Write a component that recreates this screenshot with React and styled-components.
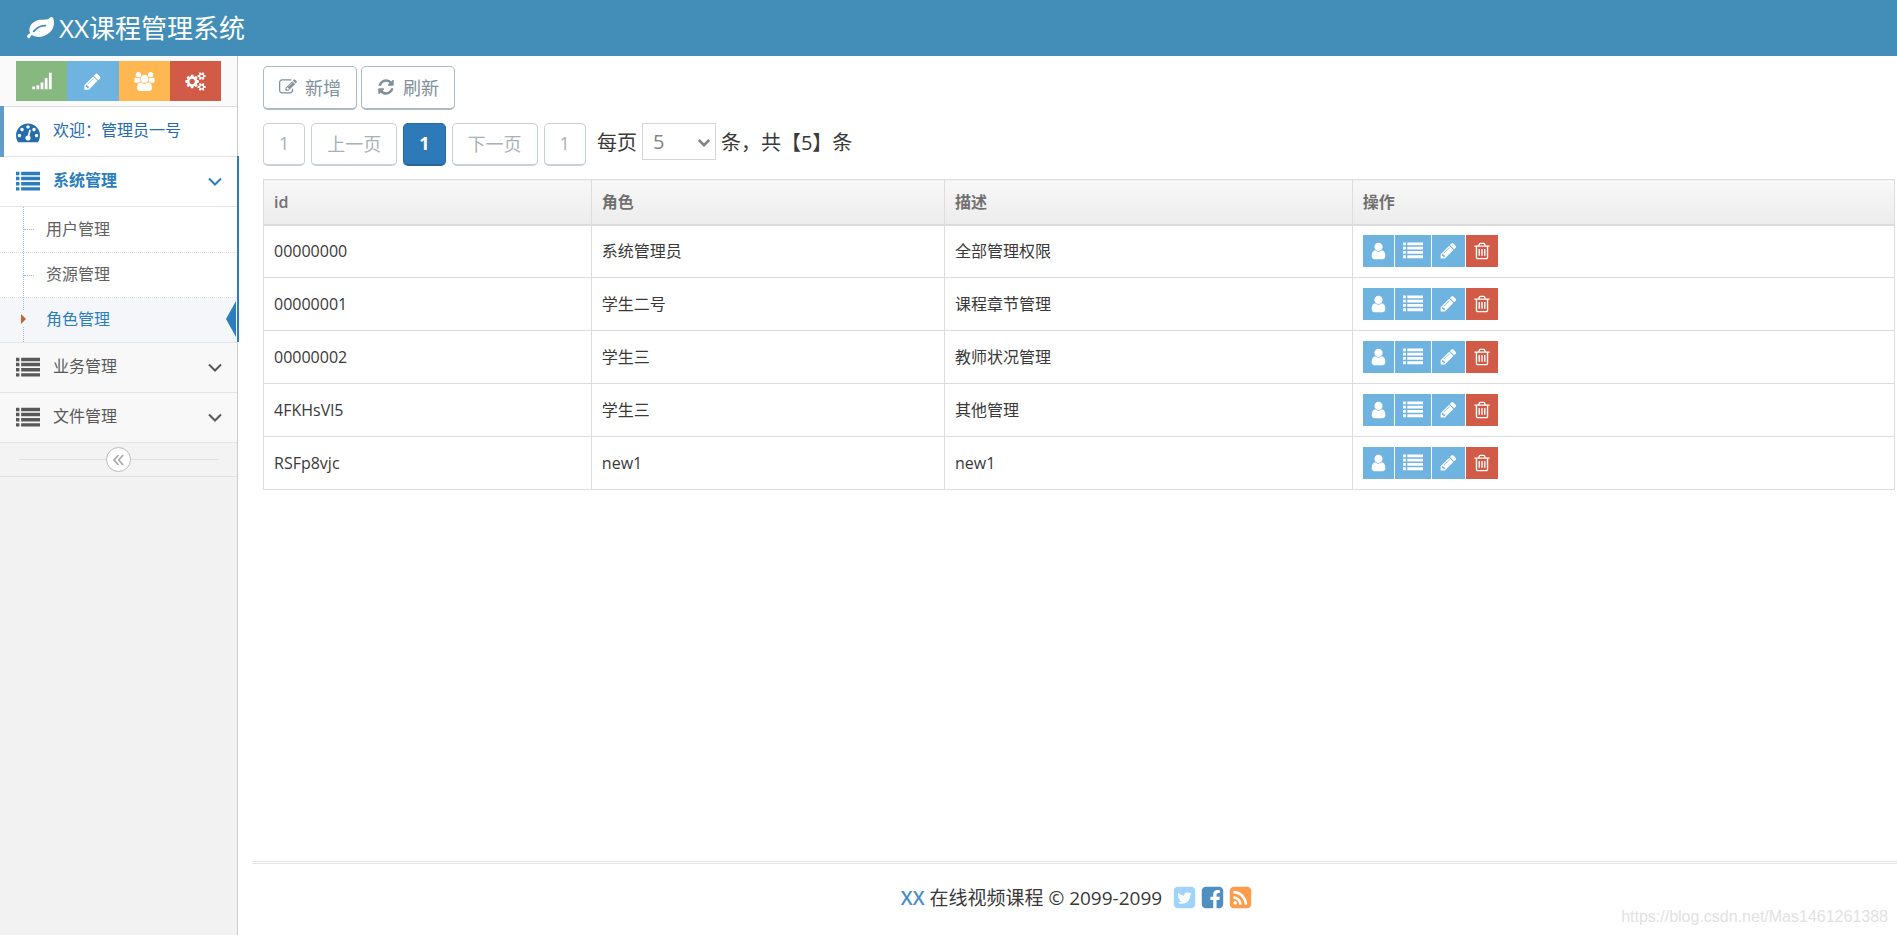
import React, { useState } from 'react';
import styled, { createGlobalStyle, css } from 'styled-components';

const GlobalStyle = createGlobalStyle`
  * {
    box-sizing: border-box;
  }

  body {
    margin: 0;
    background-color: #fff;
    color: #393939;
    font-family: 'Open Sans', 'Noto Sans CJK SC', sans-serif;
    font-size: 16px;
    line-height: 24px;
  }

  button, select {
    font-family: inherit;
  }

  a {
    text-decoration: none;
  }

  ul {
    list-style: none;
    margin: 0;
    padding: 0;
  }
`;

const Page = styled.div`
  display: flex;
  flex-direction: column;
  min-height: 100vh;
`;

const Navbar = styled.header`
  display: flex;
  align-items: center;
  height: 56px;
  padding: 0 27px;
  background-color: #438eb9;
`;

const Brand = styled.a`
  display: flex;
  align-items: center;
  gap: 5px;
  color: #fff;
  font-size: 26px;
  line-height: 36px;
  white-space: nowrap;
`;

const Body = styled.div`
  display: flex;
  flex: 1;
`;

const Sidebar = styled.nav`
  flex: none;
  width: 238px;
  background-color: #f2f2f2;
  border-right: 1px solid #ccc;
`;

const Shortcuts = styled.div`
  display: flex;
  height: 51px;
  padding: 5px 16px;
  background-color: #fafafa;
  border-bottom: 1px solid #ddd;
`;

const Shortcut = styled.button`
  display: flex;
  flex: 1;
  align-items: center;
  justify-content: center;
  padding: 0;
  border: 0;
  color: #fff;
  background-color: ${props => props.color};
  cursor: pointer;
`;

const NavGroup = styled.li`
  position: relative;
  border-bottom: 1px solid #e5e5e5;

  ${props => props.$open && css`
    &::after {
      content: '';
      position: absolute;
      top: -1px;
      right: -2px;
      bottom: 0;
      width: 2px;
      background-color: #2b7dbc;
    }
  `}

  ${props => props.$current && css`
    &::before {
      content: '';
      position: absolute;
      top: -1px;
      left: 0;
      bottom: -1px;
      width: 4px;
      background-color: #629cc9;
    }
  `}
`;

const navColors = {
  focus: '#266cad',
  open: '#2b7dbc',
};

const NavLink = styled.a`
  display: flex;
  align-items: center;
  gap: 13px;
  height: 49px;
  padding: 0 15px 0 16px;
  color: ${props => navColors[props.$state] || '#585858'};
  background-color: ${props => (props.$state ? '#fff' : '#f8f8f8')};
  font-weight: ${props => (props.$state === 'open' ? 'bold' : 'normal')};
`;

const NavText = styled.span`
  flex: 1;
  padding-bottom: 3px;
`;

const Submenu = styled.ul`
  position: relative;
  background-color: #fff;
  border-top: 1px solid #e5e5e5;

  &::before {
    content: '';
    position: absolute;
    z-index: 1;
    top: 0;
    bottom: 0;
    left: 23px;
    border-left: 1px dotted #9dbdd6;
  }
`;

const SubItem = styled.li`
  position: relative;
  height: 45px;

  & + & {
    border-top: 1px dotted #e0e0e0;
  }

  &::before {
    content: '';
    position: absolute;
    top: 22px;
    left: 24px;
    width: 10px;
    border-top: 1px dotted #9dbdd6;
    display: ${props => (props.$active ? 'none' : 'block')};
  }
`;

const SubLink = styled.a`
  display: flex;
  align-items: center;
  height: 100%;
  padding: 0 0 2px 46px;
  color: ${props => (props.$active ? '#2b7dbc' : '#616161')};
  background-color: ${props => (props.$active ? '#f4f6fa' : 'transparent')};
`;

const Caret = styled.span`
  position: absolute;
  z-index: 2;
  top: 13px;
  left: 20px;
  display: flex;
  align-items: center;
  height: 16px;
  background-color: #f4f6fa;

  &::before {
    content: '';
    border: 5px solid transparent;
    border-left-color: #c86139;
    border-right-width: 0;
    margin-left: 1px;
  }
`;

const ActiveArrow = styled.span`
  position: absolute;
  top: 3px;
  right: 1px;
  border: 18px solid transparent;
  border-right: 10px solid #2b7dbc;
  border-left-width: 0;
`;

const CollapseBar = styled.div`
  display: flex;
  align-items: center;
  height: 34px;
  padding: 0 19px;
  background-color: #f3f3f3;
  border-bottom: 1px solid #e0e0e0;

  &::before,
  &::after {
    content: '';
    flex: 1;
    border-top: 1px solid #e0e0e0;
  }
`;

const CollapseButton = styled.button`
  display: flex;
  align-items: center;
  justify-content: center;
  width: 25px;
  height: 25px;
  padding: 0;
  color: #aaa;
  background-color: #fff;
  border: 1px solid #bbb;
  border-radius: 50%;
  cursor: pointer;
`;

const Main = styled.div`
  display: flex;
  flex: 1;
  flex-direction: column;
  min-width: 0;
`;

const Content = styled.main`
  flex: 1;
  padding: 10px 2px 24px 25px;
`;

const Toolbar = styled.div`
  display: flex;
  gap: 4px;
  margin-bottom: 13px;
`;

const ToolButton = styled.button`
  display: flex;
  align-items: center;
  gap: 8px;
  height: 44px;
  padding: 0 15px 2px;
  color: #80909a;
  background-color: #fff;
  border: 1px solid #abbac3;
  border-bottom-width: 2px;
  border-radius: 5px;
  font-size: 18px;
  cursor: pointer;
`;

const Pagination = styled.div`
  display: flex;
  gap: 6px;
  margin-bottom: 13px;
`;

const PageButton = styled.button`
  height: 43px;
  padding: 0 15px 2px;
  color: #a6b1b8;
  background-color: #fff;
  border: 1px solid #c7d1d7;
  border-bottom-width: 2px;
  border-radius: 5px;
  font-size: 18px;

  ${props => props.$current && css`
    color: #fff;
    background-color: #2e7ab9;
    border-color: #27699f;
    font-weight: bold;
  `}
`;

const PageSize = styled.label`
  display: flex;
  align-items: flex-start;
  gap: 5px;
  padding-left: 5px;
  font-size: 20px;
  line-height: 40px;
  white-space: nowrap;
`;

const SelectBox = styled.span`
  position: relative;
  display: flex;

  svg {
    position: absolute;
    top: 15px;
    right: 6px;
    color: #858585;
    pointer-events: none;
  }
`;

const Select = styled.select`
  appearance: none;
  width: 74px;
  height: 37px;
  padding: 0 10px;
  color: #858585;
  background-color: #fff;
  border: 1px solid #d5d5d5;
  border-radius: 0;
  font-size: 20px;
`;

const Table = styled.table`
  width: 100%;
  table-layout: fixed;
  border-collapse: collapse;
  border: 1px solid #ddd;
`;

const Th = styled.th`
  width: ${props => props.width};
  height: 45px;
  padding: 0 10px;
  color: #707070;
  background-image: linear-gradient(to bottom, #f8f8f8, #ececec);
  border: 1px solid #ddd;
  border-bottom-width: 2px;
  font-weight: 600;
  text-align: left;
`;

const Td = styled.td`
  height: 53px;
  padding: 0 10px;
  border: 1px solid #ddd;
`;

const Actions = styled.div`
  display: flex;
  gap: 1px;
`;

const ActionButton = styled.button`
  display: flex;
  align-items: center;
  justify-content: center;
  height: 32px;
  padding: 0 8px;
  color: #fff;
  background-color: ${props => (props.$danger ? '#d15b47' : '#6fb3e0')};
  border: 0;
  cursor: pointer;
`;

const Footer = styled.footer`
  display: flex;
  align-items: center;
  justify-content: center;
  gap: 10px;
  height: 74px;
  margin-left: 15px;
  padding: 0 0 4px 4px;
  border-top: 3px double #e5e5e5;
  font-size: 19px;
`;

const FooterBrand = styled.span`
  color: #478fca;
  font-weight: 600;
`;

const Socials = styled.span`
  display: flex;
  gap: 3px;
`;

const SocialLink = styled.a`
  display: flex;
  color: ${props => props.color};
`;

const Watermark = styled.span`
  position: absolute;
  right: 9px;
  bottom: 6px;
  color: #e2e2e2;
  font-family: 'Liberation Sans', Arial, sans-serif;
  font-size: 16px;
`;

const gearPath = 'v140q0 16-149 31-12 27-30 52 51 113 51 138 0 4-4 7-122 71-124 71-8 0-46-47t-52-68q-20 2-30 2t-30-2q-14 21-52 68t-46 47q-2 0-124-71-4-3-4-7 0-25 51-138-18-25-30-52-149-15-149-31v-140q0-16 149-31 13-29 30-52-51-113-51-138 0-4 4-7 4-2 35-20t59-34 30-16q8 0 46 46.5t52 67.5q20-2 30-2t30 2q51-71 92-112l6-2q4 0 124 70 4 3 4 7 0 25-51 138 17 23 30 52 149 15 149 31z';

const icons = {
  leaf: 'M1280 704q0-26-19-45t-45-19q-172 0-318 49.5t-259.5 134-235.5 219.5q-19 21-19 45 0 26 19 45t45 19q24 0 45-19 27-24 74-71t67-66q137-124 268.5-176t313.5-52q26 0 45-19t19-45zm512-198q0 95-20 193-46 224-184.5 383t-357.5 268q-214 108-438 108-148 0-286-47-15-5-88-42t-96-37q-16 0-39.5 32t-45 70-52.5 70-60 32q-43 0-63.5-17.5t-45.5-59.5q-2-4-6-11t-5.5-10-3-9.5-1.5-13.5q0-35 31-73.5t68-65.5 68-56 31-48q0-4-14-38t-16-44q-9-51-9-104 0-115 43.5-220t119-184.5 170.5-139 204-95.5q55-18 145-25.5t179.5-9 178.5-6 163.5-24 113.5-56.5l29.5-29.5 29.5-28 27-20 36.5-16 43.5-4.5q39 0 70.5 46t47.5 112 24 124 8 96z',
  signal: 'M0 1280h256v256h-256zM384 1152h256v384h-256zM768 896h256v640h-256zM1152 512h256v1024h-256zM1536 0h256v1536h-256z',
  pencil: 'M491 1536l91-91-235-235-91 91v107h128v128h107zm523-928q0-22-22-22-10 0-17 7l-542 542q-7 7-7 17 0 22 22 22 10 0 17-7l542-542q7-7 7-17zm-54-192l416 416-832 832h-416v-416zm683 96q0 53-37 90l-166 166-416-416 166-165q36-38 90-38 53 0 91 38l235 234q37 39 37 91z',
  users: 'M593 896q-162 5-265 128h-134q-82 0-138-40.5t-56-118.5q0-353 124-353 6 0 43.5 21t97.5 42.5 119 21.5q67 0 133-23-5 37-5 66 0 139 81 256zm1071 637q0 120-73 189.5t-194 69.5h-874q-121 0-194-69.5t-73-189.5q0-53 3.5-103.5t14-109 26.5-108.5 43-97.5 62-81 85.5-53.5 111.5-20q10 0 43 21.5t73 48 107 48 135 21.5 135-21.5 107-48 73-48 43-21.5q61 0 111.5 20t85.5 53.5 62 81 43 97.5 26.5 108.5 14 109 3.5 103.5zm-1024-1277q0 106-75 181t-181 75-181-75-75-181 75-181 181-75 181 75 75 181zm704 384q0 159-112.5 271.5t-271.5 112.5-271.5-112.5-112.5-271.5 112.5-271.5 271.5-112.5 271.5 112.5 112.5 271.5zm576 225q0 78-56 118.5t-138 40.5h-134q-103-123-265-128 81-117 81-256 0-29-5-66 66 23 133 23 59 0 119-21.5t97.5-42.5 43.5-21q124 0 124 353zm-128-609q0 106-75 181t-181 75-181-75-75-181 75-181 181-75 181 75 75 181z',
  cogs: 'M896 896q0-106-75-181t-181-75-181 75-75 181 75 181 181 75 181-75 75-181zm768 512q0-52-38-90t-90-38-90 38-38 90q0 53 37.5 90.5t90.5 37.5 90.5-37.5 37.5-90.5zm0-1024q0-52-38-90t-90-38-90 38-38 90q0 53 37.5 90.5t90.5 37.5 90.5-37.5 37.5-90.5zm-384 421v185q0 10-7 19.5t-16 10.5l-155 24q-11 35-32 76 34 48 90 115 7 11 7 20 0 12-7 19-23 30-82.5 89.5t-78.5 59.5q-11 0-21-7l-115-90q-37 19-77 31-11 108-23 155-7 24-30 24h-186q-11 0-20-7.5t-10-17.5l-23-153q-34-10-75-31l-118 89q-7 7-20 7-11 0-21-8-144-133-144-160 0-9 7-19 10-14 41-53t47-61q-23-44-35-82l-152-24q-10-1-17-9.5t-7-19.5v-185q0-10 7-19.5t16-10.5l155-24q11-35 32-76-34-48-90-115-7-11-7-20 0-12 7-20 22-30 82-89t79-59q11 0 21 7l115 90q34-18 77-32 11-108 23-154 7-24 30-24h186q11 0 20 7.5t10 17.5l23 153q34 10 75 31l118-89q8-7 20-7 11 0 21 8 144 133 144 160 0 8-7 19-12 16-42 54t-45 60q23 48 34 82l152 23q10 2 17 10.5t7 19.5zM1920 1338' + gearPath + 'M1920 314' + gearPath,
  dashboard: 'M384 1152q0-53-37.5-90.5t-90.5-37.5-90.5 37.5-37.5 90.5 37.5 90.5 90.5 37.5 90.5-37.5 37.5-90.5zm192-448q0-53-37.5-90.5t-90.5-37.5-90.5 37.5-37.5 90.5 37.5 90.5 90.5 37.5 90.5-37.5 37.5-90.5zm428 481l101-382q6-26-7.5-48.5t-38.5-29.5-48 6.5-30 39.5l-101 382q-60 5-107 43.5t-63 98.5q-20 77 20 146t117 89 146-20 89-117q16-60-6-117t-72-91zm660-33q0-53-37.5-90.5t-90.5-37.5-90.5 37.5-37.5 90.5 37.5 90.5 90.5 37.5 90.5-37.5 37.5-90.5zm-640-640q0-53-37.5-90.5t-90.5-37.5-90.5 37.5-37.5 90.5 37.5 90.5 90.5 37.5 90.5-37.5 37.5-90.5zm448 192q0-53-37.5-90.5t-90.5-37.5-90.5 37.5-37.5 90.5 37.5 90.5 90.5 37.5 90.5-37.5 37.5-90.5zm320 448q0 261-141 483-19 29-54 29h-1402q-35 0-54-29-141-221-141-483 0-182 71-348t191-286 286-191 348-71 348 71 286 191 191 286 71 348z',
  list: 'M0 128h256v256h-256zM0 512h256v256h-256zM0 896h256v256h-256zM0 1280h256v256h-256zM384 128h1408v256h-1408zM384 512h1408v256h-1408zM384 896h1408v256h-1408zM384 1280h1408v256h-1408z',
  edit: 'M888 1184l116-116-152-152-116 116v56h96v96h56zm440-720q-16-16-33 1l-350 350q-17 17-1 33t33-1l350-350q17-17 1-33zm80 594v190q0 119-84.5 203.5t-203.5 84.5h-832q-119 0-203.5-84.5t-84.5-203.5v-832q0-119 84.5-203.5t203.5-84.5h832q63 0 117 25 15 7 18 23 3 17-9 29l-49 49q-14 14-32 8-23-6-45-6h-832q-66 0-113 47t-47 113v832q0 66 47 113t113 47h832q66 0 113-47t47-113v-126q0-13 9-22l64-64q15-15 35-7t20 29zm-96-738l288 288-672 672h-288v-288zm444 132l-92 92-288-288 92-92q28-28 68-28t68 28l152 152q28 28 28 68t-28 68z',
  refresh: 'M1639 1056q0 5-1 7-64 268-268 434.5t-478 166.5q-146 0-282.5-55t-243.5-157l-129 129q-19 19-45 19t-45-19-19-45v-448q0-26 19-45t45-19h448q26 0 45 19t19 45-19 45l-137 137q71 66 161 102t187 36q134 0 250-65t186-179q11-17 53-117 8-23 30-23h192q13 0 22.5 9.5t9.5 22.5zm25-800v448q0 26-19 45t-45 19h-448q-26 0-45-19t-19-45 19-45l138-138q-148-137-349-137-134 0-250 65t-186 179q-11 17-53 117-8 23-30 23h-199q-13 0-22.5-9.5t-9.5-22.5v-7q65-268 270-434.5t480-166.5q146 0 284 55.5t245 156.5l130-129q19-19 45-19t45 19 19 45z',
  user: 'M1536 1399q0 109-62.5 187t-150.5 78h-854q-88 0-150.5-78t-62.5-187q0-85 8.5-160.5t31.5-152 58.5-131 94-89 134.5-34.5q131 128 313 128t313-128q76 0 134.5 34.5t94 89 58.5 131 31.5 152 8.5 160.5zm-256-887q0 159-112.5 271.5t-271.5 112.5-271.5-112.5-112.5-271.5 112.5-271.5 271.5-112.5 271.5 112.5 112.5 271.5z',
  trash: 'M704 736v576q0 14-9 23t-23 9h-64q-14 0-23-9t-9-23v-576q0-14 9-23t23-9h64q14 0 23 9t9 23zm256 0v576q0 14-9 23t-23 9h-64q-14 0-23-9t-9-23v-576q0-14 9-23t23-9h64q14 0 23 9t9 23zm256 0v576q0 14-9 23t-23 9h-64q-14 0-23-9t-9-23v-576q0-14 9-23t23-9h64q14 0 23 9t9 23zm128 724v-948h-896v948q0 22 7 40.5t14.5 27 10.5 8.5h832q3 0 10.5-8.5t14.5-27 7-40.5zm-672-1076h448l-48-117q-7-9-17-11h-317q-10 2-17 11zm928 32v64q0 14-9 23t-23 9h-96v948q0 83-47 143.5t-113 60.5h-832q-66 0-113-58.5t-47-141.5v-952h-96q-14 0-23-9t-9-23v-64q0-14 9-23t23-9h309l70-167q15-37 54-63t79-26h320q40 0 79 26t54 63l70 167h309q14 0 23 9t9 23z',
  twitter: 'M1408 610q-56 25-121 34 68-40 93-117-65 38-134 51-61-66-153-66-87 0-148.5 61.5t-61.5 148.5q0 29 5 48-129-7-242-65t-192-155q-29 50-29 106 0 114 91 175-47-1-100-26v2q0 75 50 133.5t123 72.5q-29 8-51 8-13 0-39-4 21 63 74.5 104t121.5 42q-116 90-261 90-26 0-50-3 148 94 322 94 112 0 210-35.5t168-95 120.5-137 75-162 24.5-168.5q0-18-1-27 63-45 105-109zm256-194v960q0 119-84.5 203.5t-203.5 84.5h-960q-119 0-203.5-84.5t-84.5-203.5v-960q0-119 84.5-203.5t203.5-84.5h960q119 0 203.5 84.5t84.5 203.5z',
  facebook: 'M1376 128q119 0 203.5 84.5t84.5 203.5v960q0 119-84.5 203.5t-203.5 84.5h-188v-595h199l30-232h-229v-148q0-56 23.5-84t91.5-28l122-1v-207q-63-9-178-9-136 0-217.5 80t-81.5 226v171h-200v232h200v595h-532q-119 0-203.5-84.5t-84.5-203.5v-960q0-119 84.5-203.5t203.5-84.5h960z',
  rss: 'M640 1280q0-53-37.5-90.5t-90.5-37.5-90.5 37.5-37.5 90.5 37.5 90.5 90.5 37.5 90.5-37.5 37.5-90.5zm351 94q-13-232-177-396t-396-177q-14-1-24 9t-10 23v128q0 13 8.5 22t21.5 10q154 11 264 121t121 264q1 13 10 21.5t22 8.5h128q13 0 23-10t9-24zm384 1q-5-154-56-297.5t-139.5-260-205-205-260-139.5-297.5-56q-14-1-23 9-10 10-10 23v128q0 13 9 22t22 10q204 7 378 111.5t278.5 278.5 111.5 378q1 13 10 22t22 9h128q13 0 23-10 11-9 9-23zm289-959v960q0 119-84.5 203.5t-203.5 84.5h-960q-119 0-203.5-84.5t-84.5-203.5v-960q0-119 84.5-203.5t203.5-84.5h960q119 0 203.5 84.5t84.5 203.5z',
};

// box is the viewBox, trimmed for the narrow glyphs
const Icon = ({ name, width = 18, height = 18, box = '0 0 1792 1792' }) => (
  <svg width={width} height={height} viewBox={box} fill="currentColor" aria-hidden="true">
    <path d={icons[name]} />
  </svg>
);

const AngleDown = ({ width = 14, weight = 2 }) => (
  <svg width={width} height="9" viewBox="0 0 14 9" fill="none" stroke="currentColor" strokeWidth={weight} aria-hidden="true">
    <path d="M1 1.5l6 6 6-6" />
  </svg>
);

const AngleDoubleLeft = () => (
  <svg width="11" height="12" viewBox="0 0 11 12" fill="none" stroke="currentColor" strokeWidth="1.8" aria-hidden="true">
    <path d="M5.5 1L1 6l4.5 5M10.2 1L5.7 6l4.5 5" />
  </svg>
);

const submenu = ['用户管理', '资源管理', '角色管理'];

const roles = [
  { id: '00000000', name: '系统管理员', desc: '全部管理权限' },
  { id: '00000001', name: '学生二号', desc: '课程章节管理' },
  { id: '00000002', name: '学生三', desc: '教师状况管理' },
  { id: '4FKHsVl5', name: '学生三', desc: '其他管理' },
  { id: 'RSFp8vjc', name: 'new1', desc: 'new1' },
];

const App = () => {
  const [current, setCurrent] = useState('角色管理');
  const [size, setSize] = useState('5');

  return (
    <Page lang="zh-CN">
      <GlobalStyle />
      <Navbar>
        <Brand href="#">
          <Icon name="leaf" width={27} height={27} />
          XX课程管理系统
        </Brand>
      </Navbar>
      <Body>
        <Sidebar>
          <Shortcuts>
            <Shortcut color="#87b87f" aria-label="统计">
              <Icon name="signal" width={20} height={18} box="0 -64 1792 1664" />
            </Shortcut>
            <Shortcut color="#6fb3e0" aria-label="编辑">
              <Icon name="pencil" width={19} height={19} />
            </Shortcut>
            <Shortcut color="#ffb752" aria-label="用户">
              <Icon name="users" width={21} height={19} box="0 0 1920 1792" />
            </Shortcut>
            <Shortcut color="#d15b47" aria-label="设置">
              <Icon name="cogs" width={21} height={19} box="0 0 1920 1792" />
            </Shortcut>
          </Shortcuts>
          <ul>
            <NavGroup $current>
              <NavLink href="#" $state="focus">
                <Icon name="dashboard" width={24} height={24} />
                <NavText>欢迎：管理员一号</NavText>
              </NavLink>
            </NavGroup>
            <NavGroup $open>
              <NavLink href="#" $state="open">
                <Icon name="list" width={24} height={24} />
                <NavText>系统管理</NavText>
                <AngleDown />
              </NavLink>
              <Submenu>
                {submenu.map(item => (
                  <SubItem key={item} $active={item === current}>
                    <SubLink href="#" $active={item === current} onClick={() => setCurrent(item)}>
                      {item}
                    </SubLink>
                    {item === current && <Caret />}
                    {item === current && <ActiveArrow />}
                  </SubItem>
                ))}
              </Submenu>
            </NavGroup>
            {['业务管理', '文件管理'].map(item => (
              <NavGroup key={item}>
                <NavLink href="#">
                  <Icon name="list" width={24} height={24} />
                  <NavText>{item}</NavText>
                  <AngleDown />
                </NavLink>
              </NavGroup>
            ))}
          </ul>
          <CollapseBar>
            <CollapseButton aria-label="收起菜单">
              <AngleDoubleLeft />
            </CollapseButton>
          </CollapseBar>
        </Sidebar>
        <Main>
          <Content>
            <Toolbar>
              <ToolButton>
                <Icon name="edit" />
                新增
              </ToolButton>
              <ToolButton>
                <Icon name="refresh" />
                刷新
              </ToolButton>
            </Toolbar>
            <Pagination>
              <PageButton disabled>1</PageButton>
              <PageButton disabled>上一页</PageButton>
              <PageButton $current>1</PageButton>
              <PageButton disabled>下一页</PageButton>
              <PageButton disabled>1</PageButton>
              <PageSize>
                每页
                <SelectBox>
                  <Select value={size} onChange={e => setSize(e.target.value)}>
                    <option>5</option>
                    <option>10</option>
                    <option>20</option>
                  </Select>
                  <AngleDown width={12} weight={3} />
                </SelectBox>
                条，共【5】条
              </PageSize>
            </Pagination>
            <Table>
              <thead>
                <tr>
                  <Th width="20.1%">id</Th>
                  <Th width="21.65%">角色</Th>
                  <Th width="25%">描述</Th>
                  <Th>操作</Th>
                </tr>
              </thead>
              <tbody>
                {roles.map(role => (
                  <tr key={role.id}>
                    <Td>{role.id}</Td>
                    <Td>{role.name}</Td>
                    <Td>{role.desc}</Td>
                    <Td>
                      <Actions>
                        <ActionButton aria-label="关联用户">
                          <Icon name="user" width={15} height={18} box="192 64 1408 1664" />
                        </ActionButton>
                        <ActionButton aria-label="关联资源">
                          <Icon name="list" width={20} height={20} />
                        </ActionButton>
                        <ActionButton aria-label="编辑">
                          <Icon name="pencil" width={17} height={18} box="64 64 1664 1728" />
                        </ActionButton>
                        <ActionButton $danger aria-label="删除">
                          <Icon name="trash" width={16} height={18} box="160 64 1472 1664" />
                        </ActionButton>
                      </Actions>
                    </Td>
                  </tr>
                ))}
              </tbody>
            </Table>
          </Content>
          <Footer>
            <span>
              <FooterBrand>XX</FooterBrand> 在线视频课程 © 2099-2099
            </span>
            <Socials>
              <SocialLink href="#" color="#a0d3fa" aria-label="Twitter">
                <Icon name="twitter" width={25} height={25} />
              </SocialLink>
              <SocialLink href="#" color="#5090c1" aria-label="Facebook">
                <Icon name="facebook" width={25} height={25} />
              </SocialLink>
              <SocialLink href="#" color="#ff9c4b" aria-label="RSS">
                <Icon name="rss" width={25} height={25} />
              </SocialLink>
            </Socials>
          </Footer>
        </Main>
      </Body>
      <Watermark>https://blog.csdn.net/Mas1461261388</Watermark>
    </Page>
  );
};

export default App;
